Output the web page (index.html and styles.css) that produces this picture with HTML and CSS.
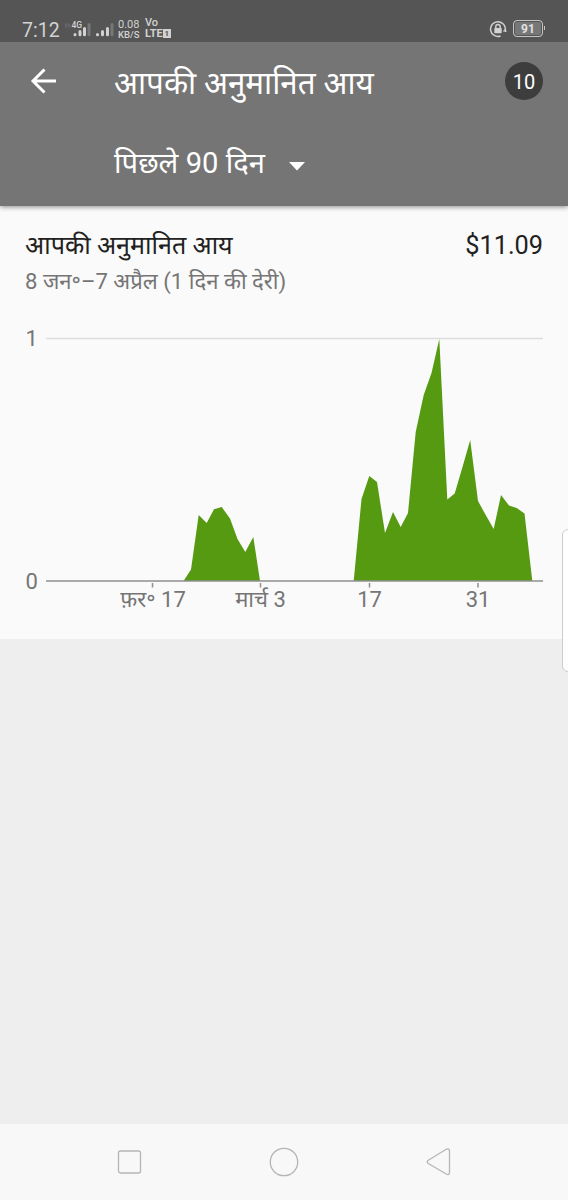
FILE: index.html
```html
<!DOCTYPE html>
<html lang="hi">

<head>
    <meta charset="UTF-8">
    <meta name="viewport" content="width=device-width, initial-scale=1.0">
    <title>आपकी अनुमानित आय</title>
    <link rel="stylesheet" href="styles.css">
</head>

<body>
    <div class="status-bar">
        <span class="clock">7:12</span>
        <svg class="signals" width="52" height="22" viewBox="0 0 52 22">
            <path class="faint" d="M0 3h1v3M3 3h1v3" />
            <text x="6.500" y="7">4G</text>
            <g class="bars">
                <path d="M10 13.500v.2M15 10.500v3.200M19.500 7.500v6.200M32.500 13.500v.2M37.500 10.500v3.200M42.500 7.500v6.200" />
                <path class="dim" d="M24 3.500v10.200M47 3.500v10.200" />
            </g>
        </svg>
        <div class="stack speed"><span>0.08</span><span>KB/S</span></div>
        <div class="stack volte"><span>Vo</span><span>LTE<i>1</i></span></div>
        <svg class="lock" width="18" height="18" viewBox="0 0 18 18">
            <path class="ring" d="M11.5 16A7.4 7.4 0 1 1 16.2 10.5" />
            <path class="ring" d="M14.5 11.5l1.7-1.5.8 2" />
            <path class="ring" d="M6.8 8.5V6.7a2.2 2.2 0 0 1 4.4 0v1.8" />
            <rect x="5.3" y="8" width="7.4" height="5.3" rx=".7" />
        </svg>
        <div class="battery">91</div>
        <div class="battery-tip"></div>
    </div>

    <header class="app-bar">
        <div class="title-row">
            <svg class="back" width="26" height="26" viewBox="0 0 26 26">
                <path d="M26 13H3M14.500 1.500L3 13l11.500 11.500" />
            </svg>
            <h1>आपकी अनुमानित आय</h1>
            <span class="count">10</span>
        </div>
        <div class="period">
            <span>पिछले 90 दिन</span>
            <svg width="16" height="9" viewBox="0 0 16 9"><path d="M0 0h16L8 8.500z" /></svg>
        </div>
    </header>

    <main class="card">
        <div class="summary">
            <h2>आपकी अनुमानित आय</h2>
            <span class="amount">$11.09</span>
        </div>
        <p class="range">8 जन॰–7 अप्रैल (1 दिन की देरी)</p>

        <svg class="chart" width="568" height="319" viewBox="0 320 568 319">
            <path class="grid" d="M46 338.500H543" />
            <path class="area" d="M183.500 581L191 569.500L198.700 515L206.700 523L214 509.300L221.700 507L230 518.500L237.500 539L245.300 552L253.300 537L260 581z" />
            <path class="area" d="M353.700 581L361.500 499L369.300 476L377 482L385 533L393 512L400.700 527L408 513L415.700 432L423.700 395L431.500 373L439.300 339L447.300 499.500L454.700 493.500L462.500 467L470.200 440L478 501L485.700 515L493.700 529L501 495L509 505.500L516.700 508L524.500 513.500L532.300 581z" />
            <path class="axis" d="M46 581H543M152.500 583v4.500M260.500 583v4.500M369.500 583v4.500M478 583v4.500" />
            <text x="25.500" y="346">1</text>
            <text x="25.500" y="588.500">0</text>
            <g class="ticks">
                <text x="153" y="606.500">फ़र॰ 17</text>
                <text x="260.500" y="606.500">मार्च 3</text>
                <text x="369.500" y="606.500">17</text>
                <text x="478" y="606.500">31</text>
            </g>
        </svg>
    </main>

    <div class="edge-handle"></div>

    <nav class="nav-bar">
        <svg width="26" height="28" viewBox="0 0 26 28"><rect x="2.500" y="3" width="22" height="22" rx="2" /></svg>
        <svg width="30" height="30" viewBox="0 0 30 30"><circle cx="15" cy="15" r="13.700" /></svg>
        <svg width="26" height="30" viewBox="0 0 26 30"><path d="M3.300 13.300L21.200 2.300Q24.500 1 24.500 4V25.500Q24.500 28.500 21.200 27L3.300 16.500Q1.200 15 3.300 13.300z" /></svg>
    </nav>
</body>

</html>
```
FILE: styles.css
```css
* {
    box-sizing: border-box;
}
body {
    font-family: Roboto, "Noto Sans Devanagari", "Noto Sans", sans-serif;
    background-color: #eeeeee;
    margin: 0;
    height: 1200px;
    display: flex;
    flex-direction: column;
    overflow: hidden;
}
.status-bar {
    display: flex;
    align-items: flex-start;
    height: 42px;
    padding: 20px 23px 0 22px;
    background-color: #555555;
    color: #d2d2d2;
    z-index: 2;
}
.clock {
    width: 43px;
    font-size: 19.5px;
    line-height: 22px;
}
.signals {
    margin-top: 1px;
}
.signals text {
    font-size: 8.5px;
    font-weight: 500;
    fill: #d2d2d2;
}
.signals path {
    fill: none;
    stroke: #d2d2d2;
    stroke-width: 3;
    stroke-linecap: round;
}
.signals .faint {
    stroke: #777777;
    stroke-width: 1;
}
.signals .dim {
    stroke: #777777;
}
.stack {
    display: flex;
    flex-direction: column;
    line-height: 10px;
    white-space: nowrap;
}
.speed {
    width: 27px;
    margin-left: 1px;
    font-size: 9.5px;
    font-weight: 500;
}
.speed span:first-child {
    font-size: 11px;
    font-weight: 400;
}
.volte {
    margin-top: -2px;
    font-size: 11px;
    font-weight: 700;
    line-height: 11px;
}
.volte span:first-child {
    height: 10px;
    font-weight: 500;
    line-height: 10px;
}
.volte span:last-child {
    display: flex;
}
.volte i {
    width: 8px;
    height: 9px;
    margin-top: 1px;
    background-color: #d2d2d2;
    color: #555555;
    font-size: 8px;
    font-style: normal;
    line-height: 9px;
    text-align: center;
}
.lock {
    margin-left: auto;
    fill: #d2d2d2;
}
.lock .ring {
    fill: none;
    stroke: #d2d2d2;
    stroke-width: 1.5;
}
.battery {
    width: 30px;
    height: 17px;
    margin-left: 6px;
    border: 1.5px solid #c4c4c4;
    border-radius: 4px;
    background-color: #777777;
    box-shadow: inset 0 0 0 1px #555555;
    color: #e0e0e0;
    font-size: 12px;
    font-weight: 700;
    line-height: 16px;
    text-align: center;
}
.battery-tip {
    width: 1px;
    height: 4px;
    margin: 6px 0 0 1px;
    background-color: #c4c4c4;
}
.app-bar {
    height: 164px;
    background-color: #757575;
    color: #ffffff;
    box-shadow: 0 1px 5px rgba(0, 0, 0, 0.45);
    z-index: 1;
}
.title-row {
    display: flex;
    align-items: center;
    height: 78px;
    padding: 0 25px 0 30px;
}
.back {
    fill: none;
    stroke: #ffffff;
    stroke-width: 3;
}
h1 {
    margin: 10px 0 0 58px;
    font-size: 31.4px;
    font-weight: 400;
    white-space: nowrap;
}
.count {
    width: 38px;
    height: 38px;
    margin-left: auto;
    border-radius: 50%;
    background-color: #3d3d3d;
    font-size: 20px;
    line-height: 40px;
    text-align: center;
}
.period {
    display: flex;
    align-items: center;
    height: 86px;
    padding: 5px 0 0 114px;
    font-size: 29.2px;
    white-space: nowrap;
}
.period svg {
    margin: 2px 0 0 24px;
    fill: #ffffff;
}
.card {
    height: 433px;
    background-color: #fafafa;
}
.summary {
    display: flex;
    justify-content: space-between;
    height: 57px;
    padding: 21px 25px 0;
    color: #212121;
    font-size: 25.3px;
    line-height: 38px;
}
h2 {
    margin: 0;
    font-size: 25.1px;
    font-weight: 400;
}
.range {
    height: 57px;
    margin: 0;
    padding-left: 25px;
    color: #757575;
    font-size: 22.1px;
    line-height: 37px;
    white-space: nowrap;
}
.chart {
    display: block;
}
.chart text {
    fill: #757575;
    font-size: 22px;
}
.chart .ticks {
    text-anchor: middle;
}
.grid {
    stroke: #dddddd;
    stroke-width: 1.5;
}
.area {
    fill: #569a12;
}
.axis {
    stroke: #909090;
    stroke-width: 1.5;
}
.edge-handle {
    position: absolute;
    top: 529px;
    right: -12px;
    width: 18px;
    height: 143px;
    border: 1px solid #cccccc;
    border-radius: 6px;
    background-color: rgba(255, 255, 255, 0.85);
}
.nav-bar {
    display: flex;
    align-items: center;
    justify-content: space-between;
    height: 76px;
    margin-top: auto;
    padding: 0 117px 0 116px;
    background-color: #f8f8f8;
}
.nav-bar svg {
    fill: none;
    stroke: #b5b5b5;
    stroke-width: 1.3;
}
```
